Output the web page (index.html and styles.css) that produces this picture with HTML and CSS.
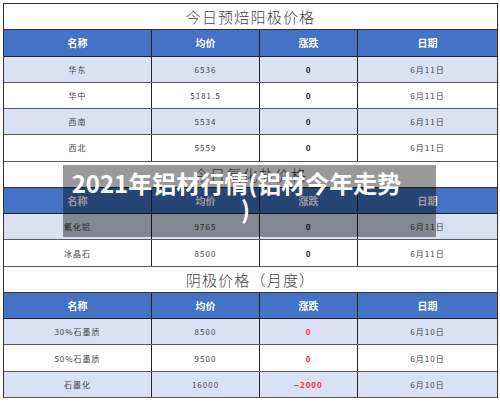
FILE: index.html
```html
<!DOCTYPE html>
<html lang="zh">
<head>
<meta charset="utf-8">
<link rel="stylesheet" href="styles.css">
</head>
<body>
<div class="page">
  <div class="sheet">
    <div class="row title"><div class="cell">今日预焙阳极价格</div></div>
    <div class="row head"><div class="cell">名称</div><div class="cell">均价</div><div class="cell">涨跌</div><div class="cell">日期</div></div>
    <div class="row alt"><div class="cell">华东</div><div class="cell">6536</div><div class="cell chg">0</div><div class="cell">6月11日</div></div>
    <div class="row"><div class="cell">华中</div><div class="cell">5181.5</div><div class="cell chg">0</div><div class="cell">6月11日</div></div>
    <div class="row alt"><div class="cell">西南</div><div class="cell">5534</div><div class="cell chg">0</div><div class="cell">6月11日</div></div>
    <div class="row"><div class="cell">西北</div><div class="cell">5559</div><div class="cell chg">0</div><div class="cell">6月11日</div></div>

    <div class="row title"><div class="cell">今日氟化盐价格</div></div>
    <div class="row head"><div class="cell">名称</div><div class="cell">均价</div><div class="cell">涨跌</div><div class="cell">日期</div></div>
    <div class="row alt"><div class="cell">氟化铝</div><div class="cell">9765</div><div class="cell chg">0</div><div class="cell">6月11日</div></div>
    <div class="row"><div class="cell">冰晶石</div><div class="cell">8500</div><div class="cell chg">0</div><div class="cell">6月11日</div></div>

    <div class="row title"><div class="cell">阴极价格（月度）</div></div>
    <div class="row head"><div class="cell">名称</div><div class="cell">均价</div><div class="cell">涨跌</div><div class="cell">日期</div></div>
    <div class="row alt"><div class="cell">30%石墨质</div><div class="cell">8500</div><div class="cell chg red">0</div><div class="cell">6月10日</div></div>
    <div class="row"><div class="cell">50%石墨质</div><div class="cell">9500</div><div class="cell chg red">0</div><div class="cell">6月10日</div></div>
    <div class="row alt"><div class="cell">石墨化</div><div class="cell">16000</div><div class="cell chg red">−2000</div><div class="cell">6月10日</div></div>
  </div>
  <div class="caption">2021年铝材行情(铝材今年走势<br><span class="close">)</span></div>
</div>
</body>
</html>
```

FILE: styles.css
```css
html, body {
  margin: 0;
  padding: 0;
  background: #ffffff;
}
body {
  width: 500px;
  height: 402px;
  overflow: hidden;
  font-family: "Noto Sans CJK SC", "Noto Sans", sans-serif;
}
.page {
  position: relative;
  width: 500px;
  height: 402px;
  padding: 3px 0 0 3px;
  box-sizing: border-box;
}
.sheet {
  width: 495px;
  border-left: 1px solid #333;
  border-top: 1px solid #333;
  border-right: 1px solid #333;
  box-sizing: border-box;
}
.row {
  display: grid;
  grid-template-columns: 148px 108px 98px 139px;
  height: 26.27px;
  border-bottom: 1px solid #5a5a5a;
  box-sizing: border-box;
}
.cell {
  display: flex;
  align-items: center;
  justify-content: center;
  border-right: 1px solid #222;
  font-size: 8px;
  letter-spacing: 1px;
  color: #444;
  white-space: nowrap;
}
.cell:last-child {
  border-right: none;
}
.alt {
  background: #d9e1f2;
}
.title {
  grid-template-columns: 1fr;
  border-bottom-color: #333;
}
.title .cell {
  font-size: 15px;
  letter-spacing: 1.2px;
  color: #444;
  font-weight: 300;
  border-right: none;
}
.head {
  background: #4472c4;
  border-bottom-color: #222;
}
.head .cell {
  color: #ffffff;
  font-weight: 700;
  font-size: 10px;
  letter-spacing: 0;
}
.chg {
  font-weight: 700;
  color: #222;
}
.red {
  color: #ff2a2a;
}
.caption {
  position: absolute;
  left: 63px;
  top: 165px;
  width: 373px;
  height: 72px;
  box-sizing: border-box;
  padding: 5px 30px 0 4px;
  background: rgba(0, 0, 0, 0.4);
  color: #ffffff;
  font-weight: 700;
  font-size: 24px;
  line-height: 26px;
  text-align: center;
  white-space: nowrap;
}
.close {
  display: inline-block;
  transform: translateX(9px);
}
```
